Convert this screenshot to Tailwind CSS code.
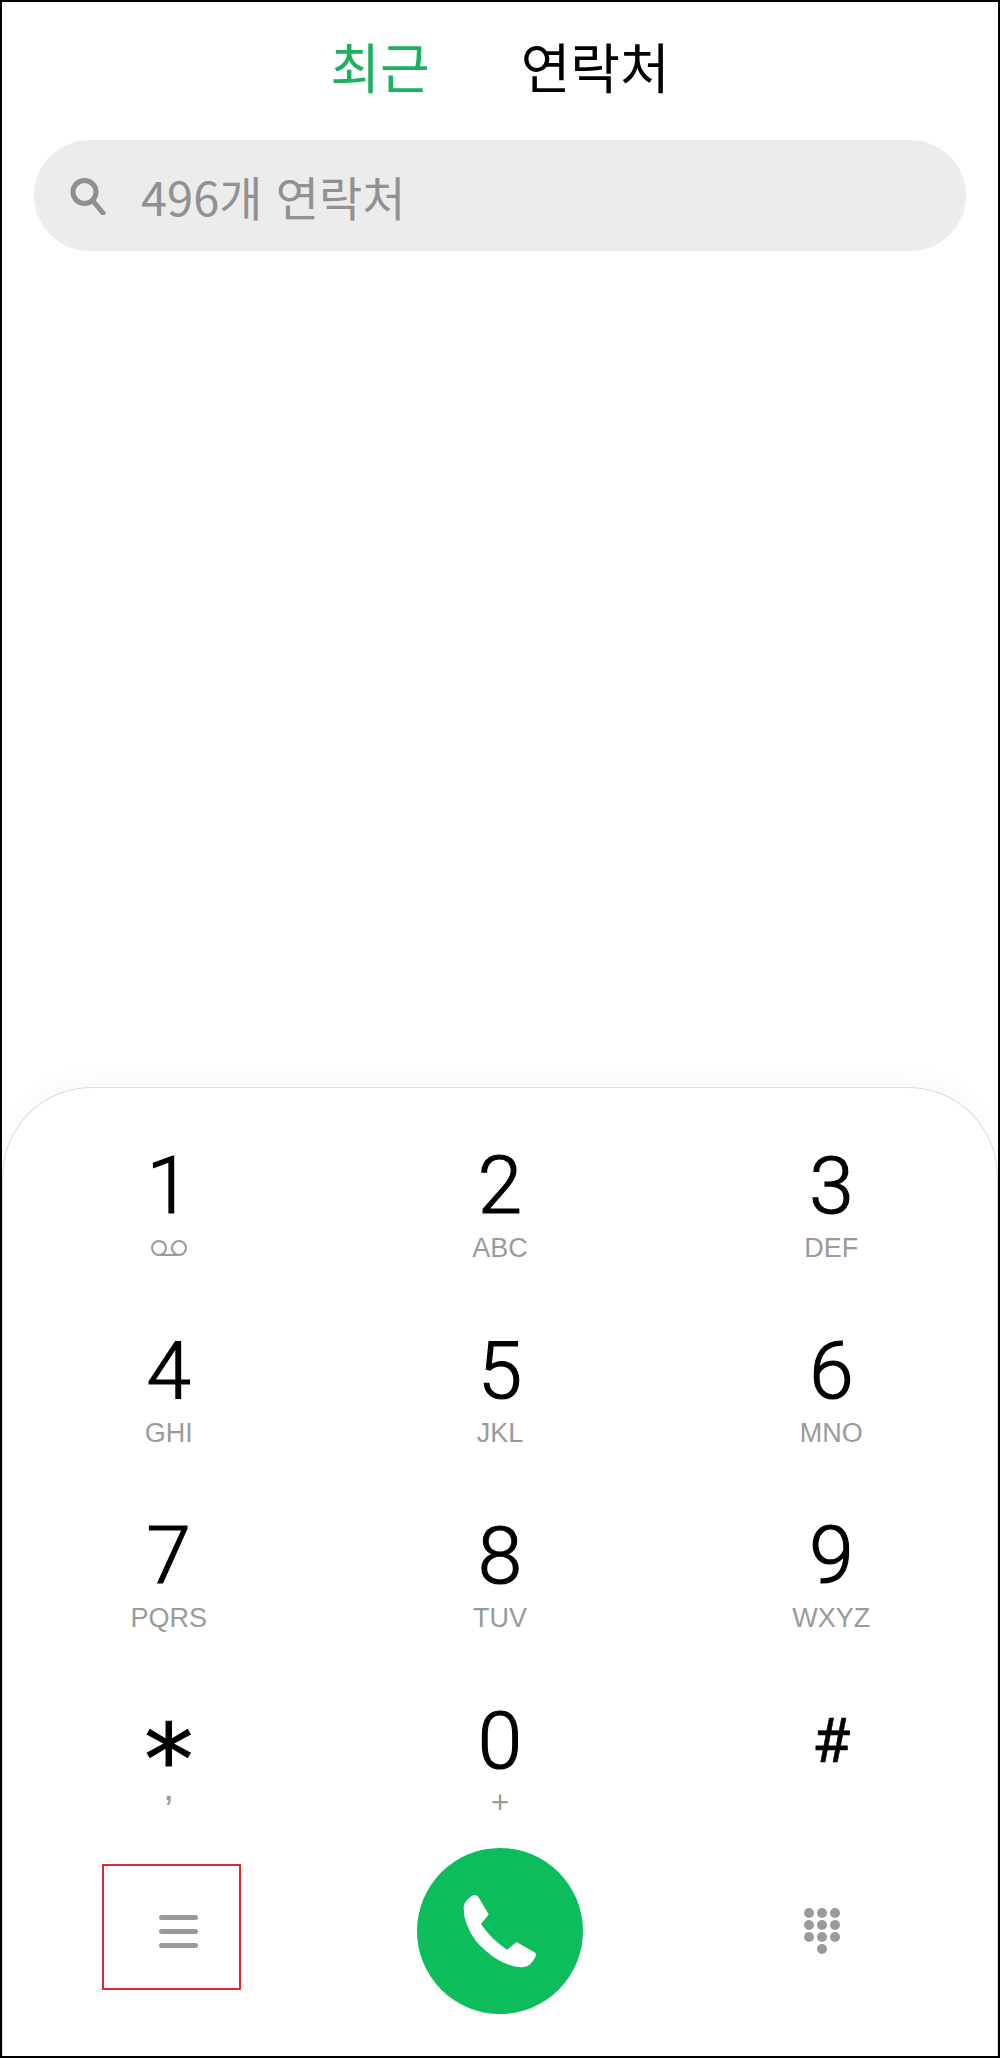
<!DOCTYPE html>
<html lang="ko">
  <head>
    <meta charset="UTF-8" />
    <title>전화</title>
    <script src="https://cdn.jsdelivr.net/npm/@tailwindcss/browser@4"></script>
  </head>
  <body class="bg-white">
    <div class="w-[1000px] h-[2058px] border-2 border-black bg-white flex flex-col overflow-hidden font-['Noto_Sans_CJK_KR','Noto_Sans',sans-serif]">
      <!-- tabs -->
      <div class="flex justify-center gap-[91px] pt-[29px] h-[138px]">
        <span class="text-[54px] leading-[70px] text-[#1bb15f]">최근</span>
        <span class="text-[54px] leading-[70px] text-black">연락처</span>
      </div>

      <!-- search -->
      <div class="mx-[32px] h-[111px] rounded-full bg-[#ececec] flex items-center pl-[36px]">
        <svg class="w-[36px] h-[38px]" viewBox="0 0 36 38" fill="none" stroke="#8f8f8f" stroke-width="5">
          <circle cx="14.5" cy="15" r="11.5" />
          <path d="M23 24 L33 36" stroke-linecap="round" />
        </svg>
        <span class="ml-[35px] text-[47px] leading-[60px] text-[#919191]">496개 연락처</span>
      </div>

      <div class="flex-1"></div>

      <!-- dial pad -->
      <div class="h-[969px] rounded-t-[90px] border border-b-0 border-[#dcdcdc] bg-white shadow-[0_-10px_24px_rgba(0,0,0,0.025)] flex flex-col">
        <div class="grid grid-cols-3 pt-[53px] font-['Roboto',sans-serif]">
          <div class="h-[185px] flex flex-col items-center">
            <span class="h-[87px] text-[80px] leading-[90px] font-light [-webkit-text-stroke:1.2px_black] text-black">1</span>
            <svg class="mt-[11px] w-[38px] h-[18px]" viewBox="0 0 38 18" fill="none" stroke="#9a9a9a" stroke-width="2">
              <circle cx="9" cy="9" r="7" />
              <circle cx="29" cy="9" r="7" />
              <path d="M9 16 H29" />
            </svg>
          </div>
          <div class="h-[185px] flex flex-col items-center">
            <span class="h-[87px] text-[80px] leading-[90px] font-light [-webkit-text-stroke:1.2px_black] text-black">2</span>
            <span class="text-[27px] leading-[40px] text-[#9a9a9a] font-['Liberation_Sans',sans-serif]">ABC</span>
          </div>
          <div class="h-[185px] flex flex-col items-center">
            <span class="h-[87px] text-[80px] leading-[90px] font-light [-webkit-text-stroke:1.2px_black] text-black">3</span>
            <span class="text-[27px] leading-[40px] text-[#9a9a9a] font-['Liberation_Sans',sans-serif]">DEF</span>
          </div>

          <div class="h-[185px] flex flex-col items-center">
            <span class="h-[87px] text-[80px] leading-[90px] font-light [-webkit-text-stroke:1.2px_black] text-black">4</span>
            <span class="text-[27px] leading-[40px] text-[#9a9a9a] font-['Liberation_Sans',sans-serif]">GHI</span>
          </div>
          <div class="h-[185px] flex flex-col items-center">
            <span class="h-[87px] text-[80px] leading-[90px] font-light [-webkit-text-stroke:1.2px_black] text-black">5</span>
            <span class="text-[27px] leading-[40px] text-[#9a9a9a] font-['Liberation_Sans',sans-serif]">JKL</span>
          </div>
          <div class="h-[185px] flex flex-col items-center">
            <span class="h-[87px] text-[80px] leading-[90px] font-light [-webkit-text-stroke:1.2px_black] text-black">6</span>
            <span class="text-[27px] leading-[40px] text-[#9a9a9a] font-['Liberation_Sans',sans-serif]">MNO</span>
          </div>

          <div class="h-[185px] flex flex-col items-center">
            <span class="h-[87px] text-[80px] leading-[90px] font-light [-webkit-text-stroke:1.2px_black] text-black">7</span>
            <span class="text-[27px] leading-[40px] text-[#9a9a9a] font-['Liberation_Sans',sans-serif]">PQRS</span>
          </div>
          <div class="h-[185px] flex flex-col items-center">
            <span class="h-[87px] text-[80px] leading-[90px] font-light [-webkit-text-stroke:1.2px_black] text-black">8</span>
            <span class="text-[27px] leading-[40px] text-[#9a9a9a] font-['Liberation_Sans',sans-serif]">TUV</span>
          </div>
          <div class="h-[185px] flex flex-col items-center">
            <span class="h-[87px] text-[80px] leading-[90px] font-light [-webkit-text-stroke:1.2px_black] text-black">9</span>
            <span class="text-[27px] leading-[40px] text-[#9a9a9a] font-['Liberation_Sans',sans-serif]">WXYZ</span>
          </div>

          <div class="h-[185px] flex flex-col items-center">
            <span class="mt-[41px] h-[46px] text-[98px] leading-[46px] [-webkit-text-stroke:1px_black] text-black font-['DejaVu_Sans',sans-serif]">*</span>
            <span class="h-[6px] text-[40px] leading-[6px] text-[#9a9a9a] font-['Liberation_Sans',sans-serif]">,</span>
          </div>
          <div class="h-[185px] flex flex-col items-center">
            <span class="h-[87px] text-[80px] leading-[90px] font-light [-webkit-text-stroke:1.2px_black] text-black">0</span>
            <span class="text-[31px] leading-[40px] text-[#9a9a9a] font-['Liberation_Sans',sans-serif]">+</span>
          </div>
          <div class="h-[185px] flex flex-col items-center">
            <span class="h-[87px] text-[62px] leading-[90px] font-normal [-webkit-text-stroke:0.6px_black] text-black">#</span>
          </div>
        </div>

        <!-- bottom actions -->
        <div class="grid grid-cols-3 items-center mt-[-33px]">
          <div class="flex pl-[99px] mb-[9px]">
            <div class="w-[139px] h-[126px] border-2 border-[#e0262e] flex flex-col items-center justify-center gap-[9px] pl-[13px] pt-[9px]">
              <span class="block w-[39px] h-[5px] rounded-full bg-[#9a9a9a]"></span>
              <span class="block w-[39px] h-[5px] rounded-full bg-[#9a9a9a]"></span>
              <span class="block w-[39px] h-[5px] rounded-full bg-[#9a9a9a]"></span>
            </div>
          </div>
          <div class="flex justify-center">
            <div class="w-[166px] h-[166px] rounded-full bg-[#0dbd5b] flex items-center justify-center">
              <svg class="w-[74px] h-[74px]" viewBox="1130 223 210 224" preserveAspectRatio="none" fill="#fff">
                <path d="M1160 226 Q1170 224 1175 234 L1203 285 L1181 314 Q1210 360 1255 392 L1282 368 L1334 400 Q1340 405 1335 414 Q1322 446 1296 445 Q1230 440 1170 370 Q1130 315 1132 262 Q1134 240 1160 226Z" />
              </svg>
            </div>
          </div>
          <div class="flex justify-center pr-[18px]">
            <div class="grid grid-cols-3 gap-x-[3px] gap-y-[2px] w-[36px]">
              <span class="w-[10px] h-[10px] rounded-full bg-[#9a9a9a]"></span>
              <span class="w-[10px] h-[10px] rounded-full bg-[#9a9a9a]"></span>
              <span class="w-[10px] h-[10px] rounded-full bg-[#9a9a9a]"></span>
              <span class="w-[10px] h-[10px] rounded-full bg-[#9a9a9a]"></span>
              <span class="w-[10px] h-[10px] rounded-full bg-[#9a9a9a]"></span>
              <span class="w-[10px] h-[10px] rounded-full bg-[#9a9a9a]"></span>
              <span class="w-[10px] h-[10px] rounded-full bg-[#9a9a9a]"></span>
              <span class="w-[10px] h-[10px] rounded-full bg-[#9a9a9a]"></span>
              <span class="w-[10px] h-[10px] rounded-full bg-[#9a9a9a]"></span>
              <span class="w-[10px] h-[10px] rounded-full bg-[#9a9a9a] col-start-2"></span>
            </div>
          </div>
        </div>
      </div>
    </div>
  </body>
</html>
